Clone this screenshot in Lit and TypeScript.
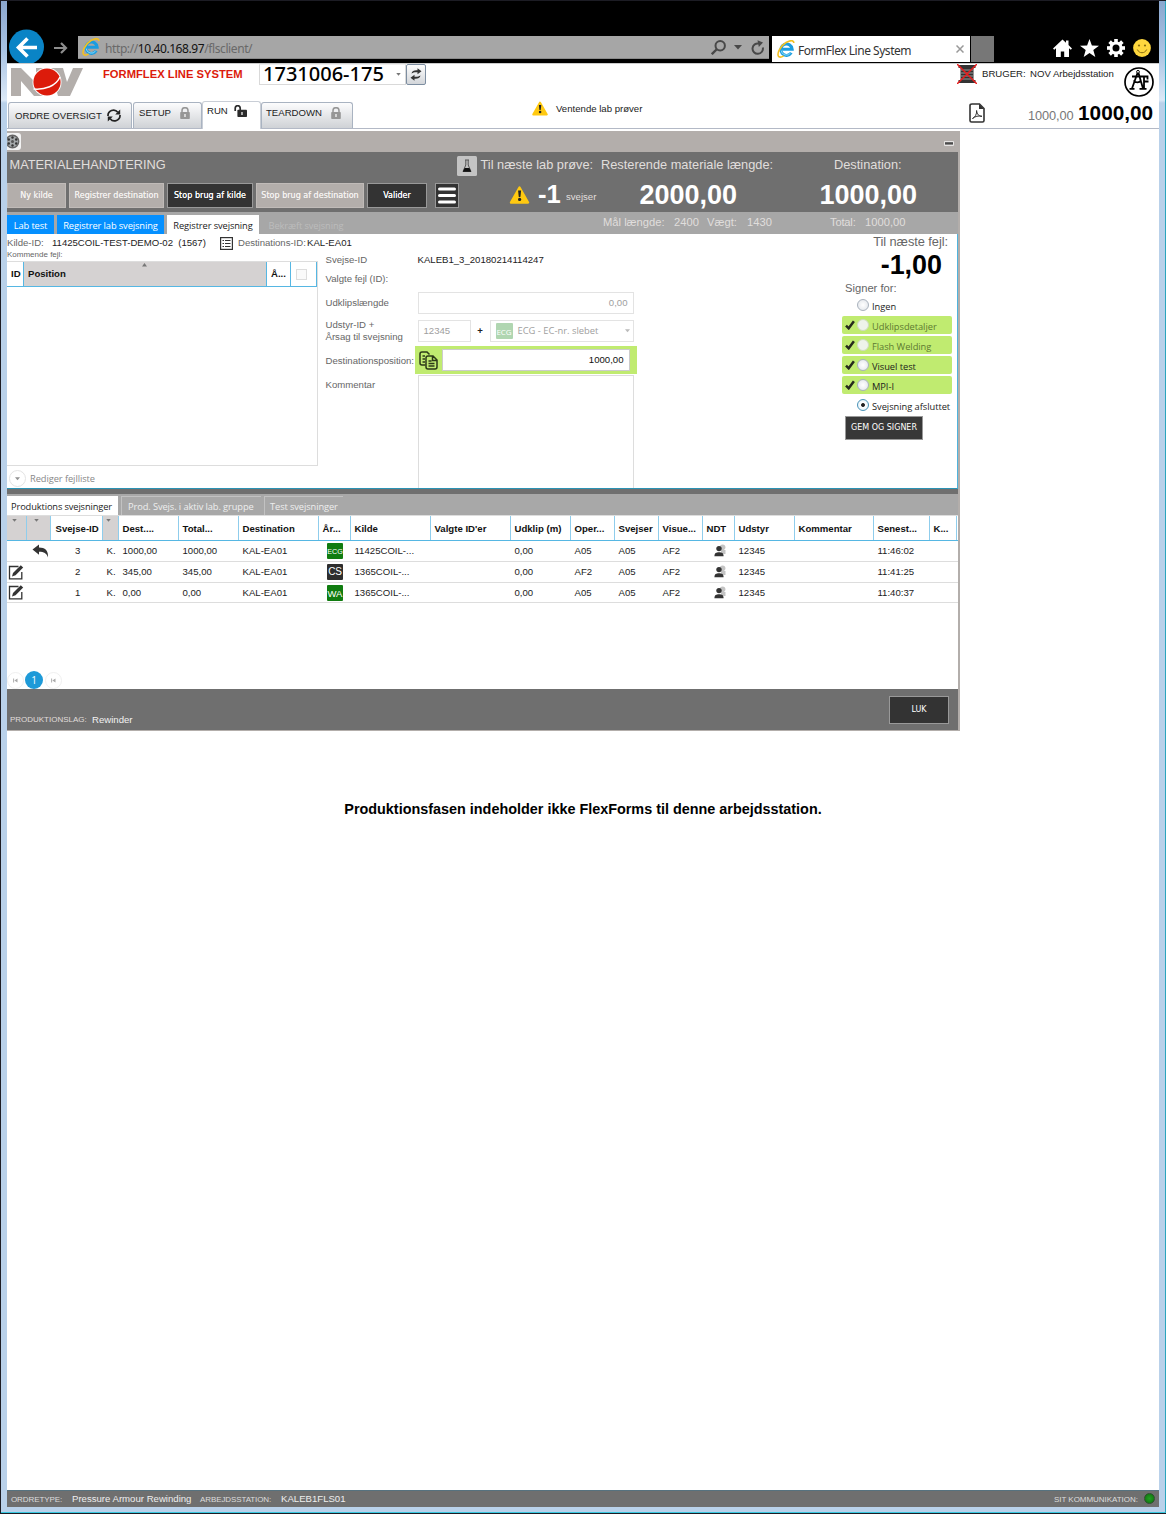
import { LitElement, html, css, svg, nothing } from "lit";
import { customElement } from "lit/decorators.js";
import { classMap } from "lit/directives/class-map.js";

const ieLogo = html`<svg class="ie" viewBox="0 0 18 18">
  <path d="M14.300 12.800A5.700 5.700 0 1 1 15.200 9.300H5.500" fill="none" stroke="#1b9de0" stroke-width="3"/>
  <path d="M13.600 13A5.200 5.200 0 0 1 4.200 10.500" fill="none" stroke="#8adcfa" stroke-width="1"/>
  <path d="M2 16.800C-.8 14.500 3 6 9 2.500 13 .2 16.800-.2 16.900 3M2 16.800c1.500.8 3.300-.1 4.600-1" fill="none" stroke="#f4c020" stroke-width="1.600"/>
</svg>`;

const warn = html`<svg class="warn" viewBox="0 0 20 18">
  <path d="M10 1.500 18.500 16.500H1.500Z" fill="#ffc911" stroke="#ffc911" stroke-width="2.400" stroke-linejoin="round"/>
  <path d="M8.600 4.500h3l-.7 6.500H9.300Z" fill="#222"/><circle cx="10.100" cy="13.400" r="1.600" fill="#222"/>
</svg>`;

const lock = (c: string) => html`<svg class="lock" viewBox="0 0 10 12">
  <path d="M2 5.500V3.700a3 3 0 0 1 6 0V5.500" fill="none" stroke=${c} stroke-width="1.500"/>
  <rect x=".2" y="5" width="9.600" height="7" rx=".8" fill=${c}/>
  <path d="M5 7v3" stroke="#fff" stroke-width="1.200"/></svg>`;

const unlock = html`<svg class="unlock" viewBox="0 0 13 12">
  <path d="M1.200 6V3.200a2.500 2.500 0 0 1 5 0V5.500" fill="none" stroke="#2b2b2b" stroke-width="1.700"/>
  <rect x="3.400" y="4.800" width="9.600" height="7.200" rx=".8" fill="#2b2b2b"/>
  <path d="M8 7v3" stroke="#fff" stroke-width="1.200"/></svg>`;

const check = html`<svg class="check" viewBox="0 0 10 10"><path d="M1 5.600 3.700 8.300 8.900 1.300" fill="none" stroke="#262b1c" stroke-width="2.500"/></svg>`;

const edit = html`<svg class="edit" viewBox="0 0 16 16">
  <path d="M10.500 2.500H1.500v12.300h12.300V8" fill="none" stroke="#333" stroke-width="1.300"/>
  <path d="M4 12.500 5 9 12.800 1.200 15.200 3.600 7.500 11.300Z" fill="#333"/></svg>`;

const undo = html`<svg class="undo" viewBox="0 0 17 14">
  <path d="M.5 5.500 7 .5V3.600C13 3.600 16.500 6.500 16 13.500 14.800 9.500 12 7.800 7 7.800V10.800Z" fill="#333"/></svg>`;

const people = html`<svg class="people" viewBox="0 0 12 13">
  <circle cx="8.600" cy="3.200" r="2.800" fill="#c4c4c4"/><path d="M7 6h4.500v4H7Z" fill="#c4c4c4"/>
  <circle cx="5" cy="4.600" r="2.700" fill="#333"/><path d="M.4 12.300C.4 9 2.200 8.200 5 8.200s4.600.8 4.600 4.100Z" fill="#333"/></svg>`;

const hair = html`<svg class="hair" viewBox="0 0 6 4"><path d="M0 0h6L3 3.500Z" fill="#777"/></svg>`;

const jump = html`<svg class="jump" viewBox="0 0 5 5"><path d="M.6 .5v4" stroke="#999" stroke-width=".8"/><path d="M4.500.5v4L1.300 2.500Z" fill="#aaa"/></svg>`;

const gearTeeth = [0, 45, 90, 135].map(a => svg`<rect x="7.200" y="0" width="3.600" height="18" transform="rotate(${a} 9 9)" fill="#fff"/>`);

interface Weld { edit: boolean; nr: string; pos: string; total: string; code: string; tone: string; kilde: string; oper: string; tid: string; }
const welds: Weld[] = [
  { edit: false, nr: "3", pos: "1000,00", total: "1000,00", code: "ECG", tone: "g", kilde: "11425COIL-...", oper: "A05", tid: "11:46:02" },
  { edit: true, nr: "2", pos: "345,00", total: "345,00", code: "CS", tone: "k", kilde: "1365COIL-...", oper: "AF2", tid: "11:41:25" },
  { edit: true, nr: "1", pos: "0,00", total: "0,00", code: "WA", tone: "g w", kilde: "1365COIL-...", oper: "A05", tid: "11:40:37" },
];
const heads = ["", "", "Svejse-ID", "", "Dest....", "Total...", "Destination", "År...", "Kilde", "Valgte ID'er", "Udklip (m)", "Oper...", "Svejser", "Visue...", "NDT", "Udstyr", "Kommentar", "Senest...", "K..."];
const signs = [
  { t: "Ingen", ok: false, dim: false, on: false },
  { t: "Udklipsdetaljer", ok: true, dim: true, on: false },
  { t: "Flash Welding", ok: true, dim: true, on: false },
  { t: "Visuel test", ok: true, dim: false, on: false },
  { t: "MPI-I", ok: true, dim: false, on: false },
  { t: "Svejsning afsluttet", ok: false, dim: false, on: true },
];

@customElement("browser-bar")
class BrowserBar extends LitElement {
  static styles = css`
    :host { display: flex; box-sizing: border-box; height: 63px; padding-top: 36px; background: #000; font-family: "Noto Sans", sans-serif; }
    svg { display: block; flex: none; }
    .back { width: 35px; height: 35px; margin: -7px 0 0 2px; }
    .fwd { width: 14px; height: 14px; margin: 5px 0 0 10px; }
    .addr { display: flex; box-sizing: border-box; width: 691px; height: 23px; margin-left: 10px; background: #a6a6a6; border-bottom: 1px solid #8a8a8a; color: #696969; font-size: 12px; line-height: 23px; align-items: center; }
    .ie { width: 18px; height: 18px; }
    .addr .ie { margin-left: 4px; }
    .url { margin: 2px 0 0 5px; width: 606px; white-space: nowrap; letter-spacing: -0.4px; }
    .url b { font-weight: 400; color: #111; letter-spacing: -0.42px; }
    .find { width: 15px; height: 15px; }
    .dd { width: 8px; height: 5px; margin: 0 9px 0 8px; }
    .rel { width: 14px; height: 15px; }
    .tab { display: flex; width: 198px; height: 26px; margin-left: 3px; background: #fff; color: #333; font-size: 12px; align-items: center; }
    .tab .ie { margin-left: 5px; }
    .tab span { margin-left: 3px; width: 158px; white-space: nowrap; letter-spacing: -0.47px; padding-top: 2px; }
    .x { width: 8px; height: 8px; }
    .newtab { width: 23px; height: 26px; margin-left: 1px; background: #777; }
    .home { width: 19px; height: 18px; margin: 3px 0 0 59px; }
    .star { width: 19px; height: 18px; margin: 3px 0 0 8px; }
    .gear { width: 18px; height: 18px; margin: 3px 0 0 8px; }
    .smile { width: 18px; height: 18px; margin: 3px 0 0 8px; }
  `;
  render() {
    return html`
      <svg class="back" viewBox="0 0 35 35"><circle cx="17.500" cy="18" r="17.500" fill="#0a84c6"/><path d="M28 18.500H9.500M18.500 9.500 9.500 18.500 18.500 27.500" fill="none" stroke="#fff" stroke-width="3.600"/></svg>
      <svg class="fwd" viewBox="0 0 14 14"><path d="M0 7h12M7 2l5 5-5 5" fill="none" stroke="#8d8d8d" stroke-width="2.200"/></svg>
      <div class="addr">${ieLogo}<span class="url">http://<b>10.40.168.97</b>/flsclient/</span>
        <svg class="find" viewBox="0 0 15 15"><circle cx="9.200" cy="5.800" r="4.700" fill="none" stroke="#484848" stroke-width="2"/><path d="M6 9 .8 14.200" stroke="#484848" stroke-width="2.400"/></svg>
        <svg class="dd" viewBox="0 0 8 5"><path d="M0 0h8L4 4.500Z" fill="#484848"/></svg>
        <svg class="rel" viewBox="0 0 14 15"><path d="M11.800 7.500A5.200 5.200 0 1 1 8 3.600" fill="none" stroke="#484848" stroke-width="2"/><path d="M6.500 .3 12 2.500 7.800 7Z" fill="#484848"/></svg>
      </div>
      <div class="tab">${ieLogo}<span>FormFlex Line System</span>
        <svg class="x" viewBox="0 0 8 8"><path d="M.5.5l7 7M7.500.5l-7 7" stroke="#999" stroke-width="1.500"/></svg></div>
      <div class="newtab"></div>
      <svg class="home" viewBox="0 0 19 18"><path d="M9.500.5 0 9.500l1.200 1.300L3 9.200V18h4.800v-5.500h3.400V18H16V9.200l1.800 1.600L19 9.500 15.500 6V1.500H13v2.200Z" fill="#fff"/></svg>
      <svg class="star" viewBox="0 0 19 18"><path d="M9.500 0 11.900 6.600 19 6.800 13.300 11.100 15.300 18 9.500 13.900 3.700 18 5.700 11.100 0 6.800 7.100 6.600Z" fill="#fff"/></svg>
      <svg class="gear" viewBox="0 0 18 18">${gearTeeth}<circle cx="9" cy="9" r="6.600" fill="#fff"/><circle cx="9" cy="9" r="3.500" fill="#000"/></svg>
      <svg class="smile" viewBox="0 0 18 18"><circle cx="9" cy="9" r="8.900" fill="#ffd83e"/><circle cx="6" cy="6.500" r="1.100" fill="#8a6d10"/><circle cx="12" cy="6.500" r="1.100" fill="#8a6d10"/><path d="M4.300 10.500c1.800 4.300 7.600 4.300 9.400 0" fill="none" stroke="#8a6d10" stroke-width="1"/></svg>`;
  }
}

@customElement("page-head")
class PageHead extends LitElement {
  static styles = css`
    :host { display: block; box-sizing: border-box; height: 66px; background: #fff; border-top: 1px solid #ccc; border-bottom: 1px solid #b3b9c6; font: 9.6px/12px "Liberation Sans", sans-serif; color: #222; }
    svg { display: block; flex: none; }
    .r1 { display: flex; height: 37px; align-items: flex-start; white-space: nowrap; }
    .logo { width: 72px; height: 28px; margin: 4px 0 0 4px; }
    .title { width: 156px; margin: 4px 0 0 20px; font-size: 11.2px; font-weight: 700; color: #dc1b0b; letter-spacing: 0.02px; }
    .combo { display: flex; box-sizing: border-box; width: 147px; height: 21px; border: 1px solid #d9d9d9; border-top-color: #eee; align-items: center; justify-content: space-between; padding: 0 4px 0 3px; font: 500 20px/20px "Noto Sans", sans-serif; color: #000; }
    .combo span { margin-top: -1px; }
    .hair { width: 5px; height: 3px; }
    .refresh { display: flex; box-sizing: border-box; width: 20px; height: 21px; border: 1px solid #7d8ea1; border-radius: 2px; background: linear-gradient(#fdfdfd, #d3d6da); align-items: center; justify-content: center; }
    .refresh svg { width: 12px; height: 13px; }
    .spool { width: 20px; height: 20px; margin-left: 531px; }
    .user { margin: 4px 0 0 5px; width: 48px; }
    .name { margin: 4px 0 0 0; width: 94px; }
    .badge { width: 30px; height: 30px; margin-top: 3px; }
    .r2 { display: flex; height: 27px; align-items: flex-end; white-space: nowrap; }
    .tab { display: flex; box-sizing: border-box; height: 26px; border: 1px solid #a9b3c1; border-bottom: 0; border-radius: 3px 3px 0 0; background: linear-gradient(#fcfcfd, #cfd2d6); align-items: center; }
    .t1 { width: 124px; margin-left: 1px; padding-left: 6px; }
    .t2 { width: 69px; margin-left: 1px; padding: 0 0 5px 5px; }
    .t3 { width: 59px; height: 28px; margin-bottom: -1px; padding: 0 0 9px 4px; background: #fff; border-color: #c9ced6; }
    .t4 { width: 92px; padding: 0 0 5px 4px; }
    .sync { width: 14px; height: 13px; margin-left: 5px; }
    .lock { width: 10px; height: 12px; margin-left: 9px; }
    .unlock { width: 13px; height: 12px; margin-left: 6px; }
    .warn { width: 16px; height: 15px; margin: 0 0 12px 179px; }
    .pend { width: 413px; margin: 0 0 13px 8px; }
    .pdf { width: 16px; height: 20px; margin-bottom: 5px; }
    .v1 { width: 50px; margin: 0 0 4px 43px; font-size: 12.8px; line-height: 16px; color: #777; letter-spacing: -0.1px; }
    .v2 { font-size: 20.8px; line-height: 24px; font-weight: 700; color: #000; margin-bottom: 3px; }
  `;
  render() {
    return html`
      <div class="r1">
        <svg class="logo" viewBox="0 0 72 28"><path d="M0 0h10l15 15V0h8v28H23L10 13v15H0ZM39 0h13l4 14L62 0h10L59 28H47Z" fill="#b3aeab"/><circle cx="36" cy="14" r="14.500" fill="#fff"/><circle cx="36" cy="14" r="13.600" fill="#dc1b0b"/><path d="M22.500 21C34 22 45 18 49 9" fill="none" stroke="#fff" stroke-width="1.500"/></svg>
        <div class="title">FORMFLEX LINE SYSTEM</div>
        <div class="combo"><span>1731006-175</span>${hair}</div>
        <div class="refresh"><svg viewBox="0 0 12 13"><path d="M1.500 5.500C2 2.800 4.500 2 7.500 2.300V.3L11.500 3.300 7.500 6.300V4.300C5 4 3.500 4.300 1.500 5.500ZM10.500 7.500C10 10.200 7.500 11 4.500 10.700v2L.5 9.700l4-3v2C7 9 8.500 8.700 10.500 7.500Z" fill="#333"/></svg></div>
        <svg class="spool" viewBox="0 0 20 20"><path d="M1.500 1h17v3h-2v12h2v3h-17v-3h2V4h-2Z" fill="#333"/><path d="M4 6h12M4 9h12M4 12h12M4 15h12" stroke="#999"/><path d="M0 0 20 20M20 0 0 20" stroke="#e81c1c" stroke-width="1.500"/></svg>
        <div class="user">BRUGER:</div><div class="name">NOV Arbejdsstation</div>
        <svg class="badge" viewBox="0 0 30 30"><circle cx="15" cy="15" r="14" fill="#fff" stroke="#000" stroke-width="1.700"/>
          <circle cx="14" cy="4.800" r="1.400" fill="none" stroke="#000"/>
          <path d="M13.500 6 8 21.500M14.500 6 19 21.500M5.500 21.800h5M15.500 21.800h7M8 9.500h15.500v3M20 9.500v12M20 14.500h4.500M9.500 13.500c2 2.500 6 2.500 7.500 0" fill="none" stroke="#000" stroke-width="1.800"/></svg>
      </div>
      <div class="r2">
        <div class="tab t1">ORDRE OVERSIGT<svg class="sync" viewBox="0 0 14 13"><path d="M1 7A5.500 5.500 0 0 1 10.800 3.200M13 6A5.500 5.500 0 0 1 3.200 9.800" fill="none" stroke="#222" stroke-width="1.700"/><path d="M13.200.5V5.500H8.200ZM.8 12.500V7.500H5.800Z" fill="#222"/></svg></div>
        <div class="tab t2">SETUP${lock("#969696")}</div>
        <div class="tab t3">RUN${unlock}</div>
        <div class="tab t4">TEARDOWN${lock("#969696")}</div>
        ${warn}<div class="pend">Ventende lab prøver</div>
        <svg class="pdf" viewBox="0 0 16 20"><path d="M3 1h7.500L15 5.500V17.500Q15 19 13.500 19H2.500Q1 19 1 17.500V2.500Q1 1 3 1Z" fill="#fff" stroke="#333" stroke-width="1.600"/><path d="M10 1v5h5Z" fill="#333"/><path d="M3.500 15.500C6 14.500 8 11 7.600 7.500 8 11.500 10 13.300 13 13.300 9.500 12.500 6 13.300 3.500 15.500Z" fill="none" stroke="#333"/></svg>
        <div class="v1">1000,00</div><div class="v2">1000,00</div>
      </div>`;
  }
}

@customElement("weld-form")
class WeldForm extends LitElement {
  static styles = css`
    :host { display: flex; box-sizing: border-box; height: 255px; background: #fff; border-bottom: 1px solid #2b93b4; border-right: 1px solid #4fb3dc; font: 9.6px/12px "Liberation Sans", sans-serif; color: #666; white-space: nowrap; }
    svg { display: block; flex: none; }
    .hair { width: 5px; height: 4px; }
    .left { width: 319px; flex: none; }
    .ids { display: flex; height: 17px; align-items: center; color: #1c1c1c; }
    .ids > * { flex: none; }
    .ids .k { width: 45px; color: #666; }
    .ids .v { width: 168px; white-space: pre; letter-spacing: -0.02px; }
    .ids .d { width: 69px; color: #666; margin-left: 5px; letter-spacing: -0.03px; }
    .list { width: 13px; height: 13px; margin-top: 1px; }
    .sub { font-size: 8px; height: 10px; line-height: 8px; }
    .grid { box-sizing: border-box; width: 311px; height: 205px; border: 1px solid #ddd; border-width: 1px 1px 1px 0; }
    .gh { display: grid; grid-template-columns: 17px 1fr 24px 26px; height: 24px; border-bottom: 1px solid #56b7e3; color: #111; font-weight: 700; line-height: 23px; }
    .gh div { border-right: 1px solid #56b7e3; padding-left: 4px; }
    .gh .pos { display: flex; background: #d5d2d2; justify-content: space-between; }
    .gh .pos svg { width: 5px; height: 4px; margin: 1px 119px 0 0; }
    .gh .box { display: flex; align-items: center; }
    .gh .box i { width: 9px; height: 9px; border: 1px solid #ddd; background: #fafafa; margin-left: 1px; }
    .more { display: flex; align-items: center; margin-top: 4px; color: #888; font-family: "Open Sans", sans-serif; font-size: 9.3px; letter-spacing: -0.07px; }
    .more i { display: flex; box-sizing: border-box; width: 17px; height: 17px; margin: 0 4px 0 2px; border: 1px solid #ddd; border-radius: 50%; align-items: center; justify-content: center; opacity: .8; }
    .mid { display: grid; grid-template-columns: 89px 222px; grid-template-rows: 17px 22px 25px 31px 29px 1fr; align-items: center; margin: 17px 0 0 -0.5px; width: 518.5px; height: 237px; align-content: start; flex: none; }
    .dark { color: #1c1c1c; padding-left: 3px; }
    .in { box-sizing: border-box; border: 1px solid #e3e3e3; height: 22px; line-height: 20px; padding: 0 5px; color: #a0a0a0; background: #fff; }
    .num { margin: 0 3px; text-align: right; }
    .pair { display: flex; margin: 0 3px; align-items: center; font-size: 9.6px; color: #222; }
    .pair .a { width: 53px; }
    .pair .p { width: 19px; text-align: center; font-weight: 700; }
    .pair .b { display: flex; width: 144px; align-items: center; margin-left: auto; font-family: "Open Sans", sans-serif; font-size: 9.4px; line-height: 22px; }
    .b em { width: 17px; height: 16px; margin-right: 5px; border-radius: 1px; background: #b0d6b1; color: #fff; font: 8px/17px "Open Sans", sans-serif; text-align: center; letter-spacing: -0.1px; }
    .b svg { margin-left: auto; opacity: .5; margin-right: -2px; }
    .dest { display: flex; box-sizing: border-box; height: 28px; background: #c0eb70; padding: 3px 7px 3px 4px; align-items: center; justify-content: space-between; margin-top: -1px; }
    .dest svg { width: 19px; height: 19px; }
    .dest .in { width: 188px; color: #111; text-align: right; border-color: #ccc; }
    .k2 { align-self: start; padding-top: 4px; }
    .area { box-sizing: border-box; align-self: stretch; margin: 0 3px; border: 1px solid #ddd; border-bottom: 0; }
    .right { display: flex; flex-direction: column; width: 112px; margin-left: -2px; flex: none; }
    .next { font-size: 12.8px; line-height: 15px; text-align: right; margin-right: 6px; letter-spacing: -0.05px; }
    .big { font-size: 26.9px; line-height: 31px; font-weight: 700; color: #000; text-align: right; margin: 1px 12px -1px 0; }
    .for { font-size: 11.2px; line-height: 14px; margin: 1px 0 1px 3px; }
    .s { display: flex; box-sizing: border-box; width: 110px; height: 18px; margin-bottom: 2px; border-radius: 2px; align-items: center; font: 9.3px/16px "Open Sans", sans-serif; color: #1c1c1c; letter-spacing: -0.04px; }
    .s span { margin-top: 3px; }
    .ok { background: #c0eb70; }
    .dim { color: #5d7a30; }
    .check { width: 10px; height: 10px; margin-left: 3px; }
    .s i { box-sizing: border-box; width: 12px; height: 12px; margin: 0 3px 1px 2px; border: 1px solid #a9b2bd; border-radius: 50%; background: radial-gradient(circle, #fff, #dfe3e8); }
    .dim i { border-color: #cfdcc0; background: #eef3ea; }
    .s:not(.ok) i { margin-left: 15px; }
    .on i { border-color: #4a93b8; background: radial-gradient(circle, #222 0 1.5px, #fff 2.3px, #d6ebf5); }
    .btn { box-sizing: border-box; width: 78px; height: 24px; margin: 0 0 0 3px; background: #383838; border: 1px solid #999; color: #fff; font: 8px/22px "DejaVu Sans", sans-serif; text-align: center; }
  `;
  render() {
    return html`
      <div class="left">
        <div class="ids"><span class="k">Kilde-ID:</span><span class="v">11425COIL-TEST-DEMO-02  (1567)</span>
          <svg class="list" viewBox="0 0 13 13"><rect x=".6" y=".6" width="11.800" height="11.800" fill="#fff" stroke="#333" stroke-width="1.200"/><path d="M2.500 3.500H4M5 3.500h5.500M2.500 6.500H4M5 6.500h5.500M2.500 9.500H4M5 9.500h5.500" stroke="#333" stroke-width="1.200"/></svg>
          <span class="d">Destinations-ID:</span><span class="n">KAL-EA01</span></div>
        <div class="sub">Kommende fejl:</div>
        <div class="grid"><div class="gh"><div>ID</div><div class="pos">Position<svg viewBox="0 0 5 4"><path d="M0 3.500h5L2.500 0Z" fill="#777"/></svg></div><div>Å...</div><div class="box"><i></i></div></div></div>
        <div class="more"><i>${hair}</i>Rediger fejlliste</div>
      </div>
      <div class="mid">
        <div>Svejse-ID</div><div class="dark">KALEB1_3_20180214114247</div>
        <div>Valgte fejl (ID):</div><div></div>
        <div>Udklipslængde</div><div class="in num">0,00</div>
        <div>Udstyr-ID +<br>Årsag til svejsning</div>
        <div class="pair"><div class="in a">12345</div><div class="p">+</div><div class="in b"><em>ECG</em>ECG - EC-nr. slebet${hair}</div></div>
        <div>Destinationsposition:</div>
        <div class="dest"><svg viewBox="0 0 19 19"><path d="M10.500 3.500 8 1H3Q1 1 1 3V12Q1 14 3 14H6.500M3.500 5H6M3.500 8H6M3.500 11H6" fill="none" stroke="#2c3a18" stroke-width="1.500"/><path d="M9 5h5l4 4v7Q18 18 16 18H9Q7 18 7 16V7Q7 5 9 5ZM9.500 10h3M9.500 12.500h6M9.500 15h6M13.500 5v4.500H18" fill="none" stroke="#2c3a18" stroke-width="1.500"/></svg><div class="in">1000,00</div></div>
        <div class="k2">Kommentar</div><div class="area"></div>
      </div>
      <div class="right">
        <div class="next">Til næste fejl:</div><div class="big">-1,00</div><div class="for">Signer for:</div>
        ${signs.map(s => html`<div class=${classMap({ s: true, ok: s.ok, dim: s.dim, on: s.on })}>${s.ok ? check : nothing}<i></i><span>${s.t}</span></div>`)}
        <div class="btn">GEM OG SIGNER</div>
      </div>`;
  }
}

@customElement("weld-table")
class WeldTable extends LitElement {
  static styles = css`
    :host { display: block; height: 195px; background: #fff; font: 9.6px/20px "Liberation Sans", sans-serif; color: #1c1c1c; }
    svg { display: block; flex: none; }
    .tabs { display: flex; height: 22px; background: #a8a8a8; align-items: flex-end; font: 9.3px/20px "Open Sans", sans-serif; color: #eee; white-space: nowrap; border-bottom: 1px solid #ddd; box-sizing: border-box; letter-spacing: -0.1px; }
    .tabs div { box-sizing: border-box; height: 19px; border: 1px solid #c2c2c2; border-width: 1px 0 0 1px; padding-left: 6px; }
    .tabs .a { width: 111px; background: #fff; color: #1c1c1c; padding-left: 4px; border: 0; line-height: 22px; letter-spacing: -0.13px; }
    .tabs .b { width: 140px; margin: 0 3px; }
    .tabs .c { width: 79px; padding-left: 5px; }
    .row { display: grid; box-sizing: border-box; grid-template-columns: 20px 23.500px 52px 16px 60px 60px 80px 32px 80px 80px 60px 44px 44px 44px 32px 60px 79px 56px 27.500px; height: 20.8px; border-bottom: 1px solid #ddd; }
    .row div { padding-left: 4px; overflow: hidden; white-space: nowrap; }
    .head { height: 25px; border-bottom-color: #56b7e3; font-weight: 700; line-height: 25px; color: #111; }
    .head div { border-right: 1px solid #8fcdec; padding-left: 4px; }
    .head div:nth-child(3) { padding-left: 5px; }
    .head .f { display: flex; background: #d5d2d2; justify-content: center; padding: 3px 4px 0 0; }
    .hair { width: 5px; height: 3px; }
    .row .z { padding: 0; display: flex; align-items: center; }
    .row .nr { padding: 0 0 0 24.500px; }
    .edit { width: 16px; height: 16px; margin-left: 1px; }
    .undo { width: 17px; height: 14px; margin-left: 5px; }
    .tag { display: block; width: 16px; height: 16px; margin: 1px 0 0 8.500px; border-radius: 1px; background: #107c10; color: #fff; font-size: 7.2px; line-height: 17px; text-align: center; letter-spacing: -0.1px; }
    .tag.k { background: #2e2e2e; font-size: 10px; line-height: 16px; }
    .tag.w { font-size: 9.5px; }
    .people { width: 12px; height: 13px; margin-left: 11px; }
    .pager { display: flex; align-items: center; height: 18px; margin-top: 68px; }
    .pager i { display: flex; box-sizing: border-box; width: 17px; height: 17px; border: 1px solid #f0f0f0; border-radius: 50%; align-items: center; justify-content: center; }
    .jump { width: 5px; height: 5px; }
    .pager b { width: 18px; height: 18px; margin: 0 2px 0 1px; border-radius: 50%; background: #1e9ad8; color: #fff; font: 10px/18px "Open Sans", sans-serif; text-align: center; }
  `;
  render() {
    return html`
      <div class="tabs"><div class="a">Produktions svejsninger</div><div class="b">Prod. Svejs. i aktiv lab. gruppe</div><div class="c">Test svejsninger</div></div>
      <div class="row head">${heads.map(h => h ? html`<div>${h}</div>` : html`<div class="f">${hair}</div>`)}</div>
      ${welds.map(w => html`<div class="row">
        <div class="z">${w.edit ? edit : nothing}</div><div class="z">${w.edit ? nothing : undo}</div>
        <div class="nr">${w.nr}</div><div>K.</div><div>${w.pos}</div><div>${w.total}</div><div>KAL-EA01</div>
        <div class="z"><span class="tag ${w.tone}">${w.code}</span></div>
        <div>${w.kilde}</div><div></div><div>0,00</div><div>${w.oper}</div><div>A05</div><div>AF2</div>
        <div class="z">${people}</div><div>12345</div><div></div><div>${w.tid}</div><div></div></div>`)}
      <div class="pager"><i>${jump}</i><b>1</b><i>${jump}</i></div>`;
  }
}

@customElement("material-panel")
class MaterialPanel extends LitElement {
  static styles = css`
    :host { display: block; box-sizing: border-box; width: 953px; height: 600px; margin-top: 2px; border: 1px solid #b3aeab; border-width: 0 2px 1px 0; font: 12.8px/16px "Liberation Sans", sans-serif; color: #e0dedc; white-space: nowrap; }
    svg { display: block; flex: none; }
    .bar { display: flex; box-sizing: border-box; height: 21px; background: #b3aeab; justify-content: space-between; padding-right: 4px; }
    .wheel { width: 14px; height: 17px; margin-top: 2px; }
    .min { width: 10px; height: 5px; margin-top: 10px; }
    .dark { box-sizing: border-box; height: 60px; background: #6f6f6f; }
    .l1 { display: flex; height: 28px; align-items: center; }
    .l1 > *, .l2 > * { flex: none; }
    .l1 .m { width: 447.5px; padding-left: 2.5px; }
    .flask { width: 20px; height: 20px; }
    .l1 .a { width: 120.500px; margin-left: 3.500px; }
    .l1 .b { width: 233px; }
    .l1 .a, .l1 .b, .l1 .c, .m { margin-top: -2px; }
    .l2 { display: flex; height: 30px; align-items: center; }
    .btn { box-sizing: border-box; height: 25px; margin-right: 3px; border: 1px solid #c0bbb8; background: #b3aeab; color: #f4f2f0; font: 8px/23px "DejaVu Sans", sans-serif; text-align: center; text-shadow: 0 0 .5px currentColor; }
    .on { background: #333; border-color: #999; color: #fff; }
    .w1 { width: 59px; } .w2 { width: 95px; letter-spacing: 0.03px; } .w3 { width: 86px; letter-spacing: 0.05px; } .w4 { width: 108px; letter-spacing: 0.02px; } .w5 { width: 60px; } .w6 { width: 24px; display: flex; align-items: center; justify-content: center; margin-left: 5px; }
    .w6 svg { width: 18px; height: 17px; }
    .warn { width: 21px; height: 18px; margin-left: 47px; }
    .n1 { width: 28px; margin-left: 8px; font-size: 25.6px; font-weight: 700; color: #fff; padding-bottom: 3px; }
    .n2 { width: 73.500px; font-size: 9.6px; padding-top: 4px; }
    .n3 { width: 180px; font-size: 27px; font-weight: 700; color: #fff; }
    .n3.z { width: auto; }
    .sub { display: flex; box-sizing: border-box; height: 22px; padding-top: 3px; background: #a7a7a7; font-size: 11.2px; }
    .sub span { margin-top: -1px; }
    .t { height: 19px; margin-right: 3px; background: #0590ff; color: #fff; font: 9.3px/22px "Open Sans", sans-serif; text-align: center; letter-spacing: -0.1px; }
    .t.w { background: #fff; color: #222; }
    .t.off { background: none; color: #bcbcbc; }
    .a1 { width: 47px; } .a2 { width: 107px; } .a3 { width: 92px; } .a4 { width: 88px; }
    .q1 { width: 71px; margin-left: 250px; } .q2 { width: 33px; } .q3 { width: 40px; } .q4 { width: 83px; } .q5 { width: 35px; letter-spacing: -0.2px; }
    .split { height: 5px; background: #6f6f6f; }
    .foot { display: flex; box-sizing: border-box; height: 41px; background: #6f6f6f; align-items: center; font-size: 9.6px; }
    .foot small { width: 82px; margin: 20px 0 0 3px; font-size: 8px; letter-spacing: -0.02px; }
    .foot span { width: 797px; margin-top: 20px; color: #f2f2f2; }
    .luk { box-sizing: border-box; width: 60px; height: 28px; border: 1px solid #999; background: #333; color: #fff; font: 8px/26px "DejaVu Sans", sans-serif; text-align: center; }
  `;
  render() {
    return html`
      <div class="bar">
        <svg class="wheel" viewBox="0 0 14 17"><rect x="-4" width="18" height="17" rx="3" fill="#f2f2f2"/><circle cx="5.500" cy="8.500" r="6.200" fill="#a4a8aa" stroke="#666" stroke-width="1.400"/><g fill="#333"><circle cx="5.500" cy="4.500" r="1.200"/><circle cx="5.500" cy="12.500" r="1.200"/><circle cx="1.800" cy="6.500" r="1.200"/><circle cx="9.200" cy="6.500" r="1.200"/><circle cx="1.800" cy="10.500" r="1.200"/><circle cx="9.200" cy="10.500" r="1.200"/></g><circle cx="5.500" cy="8.500" r="1.500" fill="#555"/></svg>
        <svg class="min" viewBox="0 0 10 5"><rect width="10" height="5" rx="1" fill="#e6e4e3"/><rect x="1" y="1.200" width="8" height="2.400" fill="#4a4a4a"/></svg>
      </div>
      <div class="dark">
        <div class="l1"><div class="m">MATERIALEHANDTERING</div>
          <svg class="flask" viewBox="0 0 20 20"><rect width="20" height="20" rx="1.500" fill="#c4c4c4"/><path d="M8 4h4M8.800 4v5L6 15.500h8L11.200 9V4" fill="none" stroke="#555"/><path d="M7.600 12h4.800l1.800 3.800H5.800Z" fill="#111"/></svg>
          <div class="a">Til næste lab prøve:</div><div class="b">Resterende materiale længde:</div><div class="c">Destination:</div></div>
        <div class="l2"><div class="btn w1">Ny kilde</div><div class="btn w2">Registrer destination</div><div class="btn on w3">Stop brug af kilde</div><div class="btn w4">Stop brug af destination</div><div class="btn on w5">Valider</div>
          <div class="btn on w6"><svg viewBox="0 0 18 17"><path d="M1.500 2h15M1.500 8.500h15M1.500 15h15" stroke="#fff" stroke-width="3" stroke-linecap="round"/></svg></div>
          ${warn}<div class="n1">-1</div><div class="n2">svejser</div><div class="n3">2000,00</div><div class="n3 z">1000,00</div></div>
      </div>
      <div class="sub"><div class="t a1">Lab test</div><div class="t a2">Registrer lab svejsning</div><div class="t w a3">Registrer svejsning</div><div class="t off a4">Bekræft svejsning</div>
        <span class="q1">Mål længde:</span><span class="q2">2400</span><span class="q3">Vægt:</span><span class="q4">1430</span><span class="q5">Total:</span><span>1000,00</span></div>
      <weld-form></weld-form>
      <div class="split"></div>
      <weld-table></weld-table>
      <div class="foot"><small>PRODUKTIONSLAG:</small><span>Rewinder</span><div class="luk">LUK</div></div>`;
  }
}

@customElement("app-root")
class AppRoot extends LitElement {
  static styles = css`
    :host { display: block; box-sizing: border-box; width: 1166px; height: 1514px; overflow: hidden; background: #b9d1ea; border: solid #1c1c24; border-width: 1px 0 1px 1px; font-family: "Liberation Sans", sans-serif; }
    .frame { display: flex; box-sizing: border-box; height: 1512px; background: linear-gradient(#8ba7cf, #a9c3e3 50px, #dce9f7 99px, #b9d1ea 102px); border-bottom: 1px solid #38c8e0; border-right: 1px solid #2aa5bd; padding: 0 6px 5px 6px; }
    .page { display: flex; flex-direction: column; width: 1152px; background: #fff; }
    browser-bar { margin-top: -1px; flex: none; }
    page-head, material-panel { flex: none; }
    .msg { flex: 1; margin-top: 70px; font-size: 14.4px; line-height: 17px; font-weight: 700; color: #000; text-align: center; }
    .status { display: flex; box-sizing: border-box; height: 17px; background: #6f6f6f; align-items: center; color: #eee; font-size: 9.6px; white-space: nowrap; padding: 0 4px 1px; border-top: 1px solid #56727f; }
    small { font-size: 8px; letter-spacing: -0.1px; color: #ddd; padding-top: 1px; }
    .s1 { width: 61px; } .v1 { width: 128px; } .s2 { width: 81px; } .v2 { width: 773px; } .s3 { width: 90px; letter-spacing: -0.04px; }
    .led { width: 9px; height: 9px; border: 1px solid #2f4f2f; border-radius: 50%; background: radial-gradient(circle, #23a023, #0c700c); flex: none; }
  `;
  render() {
    return html`<div class="frame"><div class="page">
      <browser-bar></browser-bar>
      <page-head></page-head>
      <material-panel></material-panel>
      <div class="msg">Produktionsfasen indeholder ikke FlexForms til denne arbejdsstation.</div>
      <div class="status"><small class="s1">ORDRETYPE:</small><span class="v1">Pressure Armour Rewinding</span><small class="s2">ARBEJDSSTATION:</small><span class="v2">KALEB1FLS01</span><small class="s3">SIT KOMMUNIKATION:</small><i class="led"></i></div>
    </div></div>`;
  }
}
